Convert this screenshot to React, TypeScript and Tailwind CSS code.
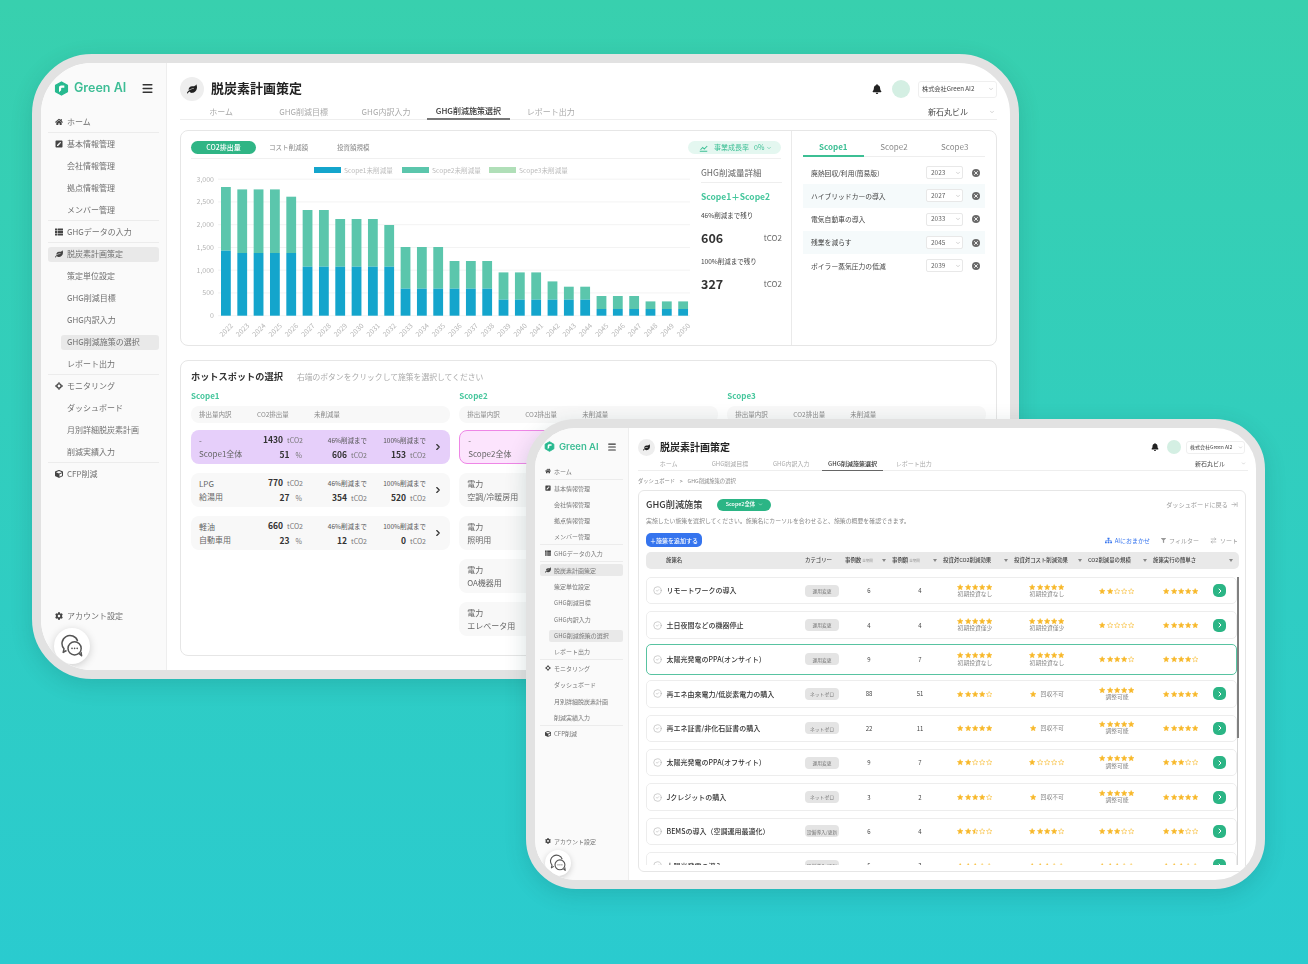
import type { ReactNode } from 'react'
import { FaBell, FaCog, FaCube, FaFilter, FaHome, FaLeaf, FaPenSquare, FaSitemap, FaThList } from 'react-icons/fa'
import { ArrowRightLeft, ArrowRightToLine, ChevronDown, ChevronRight, CircleCheck, Menu, X } from 'lucide-react'

type NavItem = { label: string; icon?: ReactNode; active?: boolean; line?: boolean }

const Monitor = ({ size }: { size: number }) => (
  <svg width={size} height={size} viewBox="0 0 16 16" fill="none" stroke="currentColor">
    <circle cx="8" cy="8" r="4.2" strokeWidth="2.6" />
    <path d="M8 0.5v3M8 12.5v3M0.5 8h3M12.5 8h3" strokeWidth="2.6" />
  </svg>
)

const navItems = (s: number): NavItem[] => [
  { label: 'ホーム', icon: <FaHome size={s} />, line: true },
  { label: '基本情報管理', icon: <FaPenSquare size={s} /> },
  { label: '会社情報管理' },
  { label: '拠点情報管理' },
  { label: 'メンバー管理', line: true },
  { label: 'GHGデータの入力', icon: <FaThList size={s} />, line: true },
  { label: '脱炭素計画策定', icon: <FaLeaf size={s} />, active: true },
  { label: '策定単位設定' },
  { label: 'GHG削減目標' },
  { label: 'GHG内訳入力' },
  { label: 'GHG削減施策の選択', active: true },
  { label: 'レポート出力', line: true },
  { label: 'モニタリング', icon: <Monitor size={s} /> },
  { label: 'ダッシュボード' },
  { label: '月別詳細脱炭素計画' },
  { label: '削減実績入力', line: true },
  { label: 'CFP削減', icon: <FaCube size={s} /> },
]

const Logo = ({ size }: { size: number }) => (
  <svg width={size} height={size} viewBox="0 0 24 24">
    <path d="M12 1.5 21.5 7v10L12 22.5 2.5 17V7Z" fill="#27b98f" stroke="#27b98f" strokeWidth="2" strokeLinejoin="round" />
    <path d="M8 18V10.8C8 8.6 9.4 7.2 11.6 7.2H16.5V10.6H12.6C11.8 10.6 11.4 11 11.4 11.8V14.6Z" fill="#fff" />
  </svg>
)

const ChatIcon = ({ size }: { size: number }) => (
  <svg width={size} height={size} viewBox="0 0 24 24" fill="none" stroke="#555" strokeWidth="1.5" strokeLinejoin="round">
    <path d="M6.5 16.5 3.2 18.4l.8-3.6A8 8 0 1 1 17.6 7" />
    <circle cx="14.6" cy="14.4" r="6.6" fill="#fff" />
    <path d="m19 19.4 2.6 2.4-.6-4" fill="#fff" />
    <circle cx="12" cy="14.4" r=".8" fill="#555" stroke="none" />
    <circle cx="14.6" cy="14.4" r=".8" fill="#555" stroke="none" />
    <circle cx="17.2" cy="14.4" r=".8" fill="#555" stroke="none" />
  </svg>
)

function SidebarLarge() {
  const items = navItems(8)
  return (
    <aside className="relative flex w-[126px] shrink-0 flex-col border-r border-[#eeeeee] bg-[#fafafa]">
      <div className="flex h-[48px] items-center pl-[13px] pr-[12px] pt-[2px]">
        <Logo size={15} />
        <span className="ml-[5px] font-['Inter',sans-serif] text-[12.5px] font-semibold text-[#3dbd95]">Green AI</span>
        <Menu size={13} strokeWidth={2.6} className="ml-auto text-[#333333]" />
      </div>
      {items.map((item) => (
        <div key={item.label} className={`mx-[7px] flex h-[22px] items-center ${item.line ? 'border-b border-[#ececec]' : ''}`}>
          {item.icon ? (
            <div className={`flex h-[15px] flex-1 items-center gap-[4px] rounded-[3px] pl-[7px] text-[8px] text-[#707070] ${item.active ? 'bg-[#e9e9e9]' : ''}`}>
              <span className="w-[8px] text-[#444444]">{item.icon}</span>
              {item.label}
            </div>
          ) : item.active ? (
            <div className="ml-[13px] flex h-[15px] flex-1 items-center rounded-[3px] bg-[#e9e9e9] pl-[6px] text-[8px] text-[#707070]">{item.label}</div>
          ) : (
            <div className="pl-[19px] text-[8px] text-[#707070]">{item.label}</div>
          )}
        </div>
      ))}
      <div className="mx-[7px] mb-[43px] mt-auto flex h-[22px] items-center gap-[4px] pl-[7px] text-[8px] text-[#707070]">
        <FaCog size={8} className="text-[#444444]" />
        アカウント設定
      </div>
      <div className="absolute bottom-[6px] left-[13px] flex h-[36px] w-[36px] items-center justify-center rounded-full bg-white shadow-[0_2px_8px_rgba(0,0,0,0.18)]">
        <ChatIcon size={24} />
      </div>
    </aside>
  )
}

function SidebarSmall() {
  const items = navItems(6)
  return (
    <aside className="relative flex w-[94px] shrink-0 flex-col border-r border-[#eeeeee] bg-[#fafafa]">
      <div className="flex h-[35.5px] items-center pl-[9px] pr-[11px] pt-[2px]">
        <Logo size={11} />
        <span className="ml-[4px] font-['Inter',sans-serif] text-[9.5px] font-semibold text-[#3dbd95]">Green AI</span>
        <Menu size={10} strokeWidth={2.6} className="ml-auto text-[#333333]" />
      </div>
      {items.map((item) => (
        <div key={item.label} className={`mx-[5px] flex h-[16.4px] items-center ${item.line ? 'border-b border-[#ececec]' : ''}`}>
          {item.icon ? (
            <div className={`flex h-[12px] flex-1 items-center gap-[3px] rounded-[2px] pl-[5px] text-[6px] text-[#777777] ${item.active ? 'bg-[#e9e9e9]' : ''}`}>
              <span className="w-[6px] text-[#444444]">{item.icon}</span>
              {item.label}
            </div>
          ) : item.active ? (
            <div className="ml-[9px] flex h-[12px] flex-1 items-center rounded-[2px] bg-[#e9e9e9] pl-[5px] text-[6px] text-[#777777]">{item.label}</div>
          ) : (
            <div className="pl-[14px] text-[6px] text-[#777777]">{item.label}</div>
          )}
        </div>
      ))}
      <div className="mx-[5px] mb-[31px] mt-auto flex h-[16px] items-center gap-[3px] pl-[5px] text-[6px] text-[#777777]">
        <FaCog size={6} className="text-[#444444]" />
        アカウント設定
      </div>
      <div className="absolute bottom-[4px] left-[10px] flex h-[26px] w-[26px] items-center justify-center rounded-full bg-white shadow-[0_2px_6px_rgba(0,0,0,0.18)]">
        <ChatIcon size={18} />
      </div>
    </aside>
  )
}

// chart: [total height, scope1 height] in px per year
const bars: [number, number][] = [
  [128.7, 65], [126.3, 62.7], [126.3, 62.7], [126.3, 62.7], [119, 62.7], [105.7, 49], [105.7, 49], [96.7, 49], [96.7, 49], [96.7, 49],
  [90.7, 49], [68.7, 27], [68.7, 27], [68.7, 27], [54.7, 27], [54.7, 27], [54.7, 27], [43.3, 16], [43.3, 16], [43.3, 16],
  [34.3, 16], [29, 16], [29, 16], [19.7, 6.7], [19.7, 6.7], [19.7, 6.7], [14.3, 6.7], [14.3, 6.7], [14.3, 6.7],
]

function Chart() {
  const base = 156.7
  return (
    <svg width="510" height="185" className="block shrink-0">
      {[
        ['Scope1未削減量', 123, '#14a5cc'],
        ['Scope2未削減量', 211, '#5bc6ac'],
        ['Scope3未削減量', 298, '#b0dfb8'],
      ].map(([t, x, c]) => (
        <g key={t as string}>
          <rect x={x as number} y="8" width="27" height="6" fill={c as string} />
          <text x={(x as number) + 30} y="13.5" fontSize="6.6" fill="#bcbcbc">{t}</text>
        </g>
      ))}
      {[0, 500, 1000, 1500, 2000, 2500, 3000].map((v, i) => (
        <g key={v}>
          <line x1="27" x2="499" y1={base - i * 22.75} y2={base - i * 22.75} stroke="#f3f3f3" />
          <text x="23" y={base + 2.5 - i * 22.75} textAnchor="end" fontSize="7" fill="#b5b5b5">{v.toLocaleString('en-US')}</text>
        </g>
      ))}
      {bars.map(([total, s1], i) => {
        const x = 30 + i * 16.33
        return (
          <g key={i}>
            <rect x={x} y={base - total} width="9.8" height={total - s1} fill="#5bc6ac" />
            <rect x={x} y={base - s1} width="9.8" height={s1} fill="#14a5cc" />
            <text transform={`translate(${x + 8} ${base + 6}) rotate(-45)`} textAnchor="end" dominantBaseline="hanging" fontSize="7" fill="#b5b5b5">{2022 + i}</text>
          </g>
        )
      })}
    </svg>
  )
}

function DetailPanel() {
  return (
    <div className="flex w-[81px] shrink-0 flex-col">
      <div className="flex h-[24px] items-center border-b border-[#eeeeee] pt-[4px] text-[8.5px] text-[#666666]">GHG削減量詳細</div>
      <div className="mt-[6px] flex h-[14px] items-center text-[8.5px] font-bold text-[#45c69c]">Scope1＋Scope2</div>
      <div className="mt-[6px] flex h-[14px] items-center text-[6.5px] text-[#444444]">46%削減まで残り</div>
      <div className="mt-[4px] flex h-[22px] items-center justify-between text-[#333333]">
        <span className="text-[12.5px] font-bold">606</span>
        <span className="text-[8px] text-[#666666]">tCO2</span>
      </div>
      <div className="mt-[6px] flex h-[14px] items-center text-[6.5px] text-[#444444]">100%削減まで残り</div>
      <div className="mt-[4px] flex h-[22px] items-center justify-between text-[#333333]">
        <span className="text-[12.5px] font-bold">327</span>
        <span className="text-[8px] text-[#666666]">tCO2</span>
      </div>
    </div>
  )
}

const picked = [
  ['廃熱回収/利用(簡易版)', '2023'],
  ['ハイブリッドカーの導入', '2027'],
  ['電気自動車の導入', '2033'],
  ['残業を減らす', '2045'],
  ['ボイラー蒸気圧力の低減', '2039'],
]

function PickedPanel() {
  return (
    <div className="w-[205px] px-[11px] pt-[10px]">
      <div className="grid h-[16px] grid-cols-3 border-b border-[#eeeeee] text-center text-[8px] leading-[12px] text-[#888888]">
        <div className="h-[16px] border-b-2 border-[#3cbf94] font-bold text-[#3cbf94]">Scope1</div>
        <div>Scope2</div>
        <div>Scope3</div>
      </div>
      <div className="mt-[4px]">
        {picked.map(([name, year], i) => (
          <div key={name} className={`flex h-[23.3px] items-center pl-[8px] pr-[5.5px] text-[6.8px] text-[#444444] ${i % 2 === 1 ? 'bg-[#f5fafb]' : ''}`}>
            <span className="flex-1">{name}</span>
            <span className="flex h-[13px] w-[37px] items-center justify-between rounded-[2px] border border-[#e8e8e8] bg-white pl-[4px] pr-[1px] text-[6.5px] text-[#666666]">
              {year}
              <ChevronDown size={6} className="text-[#aaaaaa]" />
            </span>
            <span className="ml-[8.5px] flex h-[8px] w-[8px] items-center justify-center rounded-full bg-[#6a6a6a] text-white">
              <X size={6} strokeWidth={3.5} />
            </span>
          </div>
        ))}
      </div>
    </div>
  )
}

type Hot = { a: string; b: string; total: string; pct: string; r46: string; r100: string }

const scope1Rows: Hot[] = [
  { a: '-', b: 'Scope1全体', total: '1430', pct: '51', r46: '606', r100: '153' },
  { a: 'LPG', b: '給湯用', total: '770', pct: '27', r46: '354', r100: '520' },
  { a: '軽油', b: '自動車用', total: '660', pct: '23', r46: '12', r100: '0' },
]

function HotRow({ row, tone }: { row: Hot; tone: string }) {
  return (
    <div className={`grid h-[34px] grid-cols-[58px_54px_64px_59px_24px] items-center rounded-[8px] ${tone}`}>
      <div className="pl-[8px] text-[8px] leading-[13px] text-[#666666]">
        <div>{row.a}</div>
        <div>{row.b}</div>
      </div>
      <div className="text-right text-[7px] leading-[14px] text-[#777777]">
        <div><span className="mr-[4px] text-[8.5px] font-bold text-[#333333]">{row.total}</span>tCO2</div>
        <div><span className="mr-[6px] text-[8.5px] font-bold text-[#333333]">{row.pct}</span><span className="mr-[1px]">%</span></div>
      </div>
      <div className="text-right text-[7px] leading-[14px] text-[#777777]">
        <div className="text-[6.5px] text-[#555555]">46%削減まで</div>
        <div><span className="mr-[4px] text-[8.5px] font-bold text-[#333333]">{row.r46}</span>tCO2</div>
      </div>
      <div className="text-right text-[7px] leading-[14px] text-[#777777]">
        <div className="text-[6.5px] text-[#555555]">100%削減まで</div>
        <div><span className="mr-[4px] text-[8.5px] font-bold text-[#333333]">{row.r100}</span>tCO2</div>
      </div>
      <div className="flex justify-center text-[#333333]">
        <ChevronRight size={10} strokeWidth={2.8} />
      </div>
    </div>
  )
}

// Scope2 rows lie mostly under the second window, only the left part shows
const scope2Rows = [
  ['-', 'Scope2全体'],
  ['電力', '空調/冷暖房用'],
  ['電力', '照明用'],
  ['電力', 'OA機器用'],
  ['電力', 'エレベータ用'],
]

function HotHeader() {
  return (
    <div className="mt-[4px] flex h-[17px] items-center rounded-[8px] bg-[#f8f8f8] text-[6.5px] text-[#888888]">
      <span className="w-[66px] pl-[8px]">排出量内訳</span>
      <span className="w-[57px]">CO2排出量</span>
      <span>未削減量</span>
    </div>
  )
}

function FrameOne() {
  const tabs = ['ホーム', 'GHG削減目標', 'GHG内訳入力', 'GHG削減施策選択', 'レポート出力']
  return (
    <div className="absolute left-[32px] top-[54px] flex h-[625px] w-[987px] overflow-hidden rounded-[60px] border-[9px] border-[#e2e2e2] bg-white shadow-[0_6px_22px_rgba(0,60,60,0.16)] blur-[0.45px]">
      <SidebarLarge />
      <main className="flex min-w-0 flex-1 flex-col px-[13px] pt-[14px]">
        <div className="flex h-[24px] items-center">
          <div className="flex h-[24px] w-[24px] items-center justify-center rounded-full bg-[#eeeeee]">
            <FaLeaf size={10} className="text-[#222222]" />
          </div>
          <h1 className="-mt-[2px] ml-[7px] text-[13px] font-bold text-[#222222]">脱炭素計画策定</h1>
          <div className="ml-auto flex items-center">
            <FaBell size={10} className="text-[#222222]" />
            <div className="ml-[10px] h-[18px] w-[18px] rounded-full bg-[#d4efe3]" />
            <div className="ml-[8px] flex h-[17px] w-[79px] items-center justify-between rounded-[3px] border border-[#efefef] pl-[3px] pr-[2px] text-[6.2px] text-[#444444]">
              株式会社Green AI2
              <ChevronDown size={6} className="text-[#aaaaaa]" />
            </div>
          </div>
        </div>
        <div className="flex h-[19px] items-stretch border-b border-[#eeeeee]">
          {tabs.map((t, i) => (
            <div key={t} className={`flex w-[82.4px] items-center justify-center pt-[3px] text-[8px] ${i === 3 ? '-mb-px border-b-2 border-[#777777] font-medium text-[#333333]' : 'text-[#aaaaaa]'}`}>
              {t}
            </div>
          ))}
          <div className="ml-auto flex w-[79px] items-center justify-between pl-[10px] pr-[2px] pt-[3px] text-[8px] text-[#444444]">
            新石丸ビル
            <ChevronDown size={6} className="text-[#aaaaaa]" />
          </div>
        </div>

        <section className="mt-[10px] flex h-[216px] shrink-0 rounded-[8px] border border-[#e6e6e6]">
          <div className="w-[611px] shrink-0 border-r border-[#eaeaea] px-[10px] pt-[10px]">
            <div className="flex h-[18px] items-start border-b border-[#f0f0f0] text-[6.5px] text-[#888888]">
              <span className="flex h-[13px] w-[65px] items-center justify-center rounded-full bg-[#2fb585] text-[7px] font-medium text-white">CO2排出量</span>
              <span className="ml-[13px] flex h-[13px] items-center">コスト削減額</span>
              <span className="ml-[29px] flex h-[13px] items-center">投資額規模</span>
              <span className="ml-auto flex h-[13px] w-[93px] items-center rounded-full bg-[#e4f7f0] pl-[11px] text-[7px] text-[#3cbf94]">
                <svg width="9" height="9" viewBox="0 0 12 12" fill="none" stroke="currentColor" strokeWidth="1.4" className="mr-[6px]">
                  <path d="M1 11h10M2 9l3-3 2 2 4-4" />
                </svg>
                事業成長率
                <span className="ml-[5px]">0%</span>
                <ChevronDown size={6} className="ml-[2px]" />
              </span>
            </div>
            <div className="flex">
              <Chart />
              <DetailPanel />
            </div>
          </div>
          <PickedPanel />
        </section>

        <section className="mt-[14px] h-[296px] shrink-0 rounded-[8px] border border-[#e6e6e6] px-[10px] pt-[8px]">
          <div className="flex h-[16px] items-center">
            <h2 className="text-[9.2px] font-bold text-[#333333]">ホットスポットの選択</h2>
            <span className="ml-[14px] text-[7.8px] text-[#aaaaaa]">右端のボタンをクリックして施策を選択してください</span>
          </div>
          <div className="mt-[5px] grid grid-cols-3 gap-x-[9.5px]">
            <div>
              <div className="h-[12px] text-[8px] font-bold leading-[12px] text-[#45c69c]">Scope1</div>
              <HotHeader />
              <div className="mt-[7px] flex flex-col gap-[9px]">
                {scope1Rows.map((r, i) => (
                  <HotRow key={r.b} row={r} tone={i === 0 ? 'bg-[#e6cffa]' : 'bg-[#f8f8f8]'} />
                ))}
              </div>
            </div>
            <div>
              <div className="h-[12px] text-[8px] font-bold leading-[12px] text-[#45c69c]">Scope2</div>
              <HotHeader />
              <div className="mt-[7px] flex flex-col gap-[9px]">
                {scope2Rows.map(([a, b], i) => (
                  <div key={b} className={`flex h-[34px] flex-col justify-center rounded-[8px] pl-[8px] text-[8px] leading-[13px] text-[#666666] ${i === 0 ? 'border border-[#ee86e6] bg-[#fce4fd]' : 'bg-[#f8f8f8]'}`}>
                    <div>{a}</div>
                    <div>{b}</div>
                  </div>
                ))}
              </div>
            </div>
            <div>
              <div className="h-[12px] text-[8px] font-bold leading-[12px] text-[#45c69c]">Scope3</div>
              <HotHeader />
            </div>
          </div>
        </section>
      </main>
    </div>
  )
}

const Star = ({ fill }: { fill: 'full' | 'half' | 'empty' }) => (
  <svg width="6.4" height="6.4" viewBox="0 0 24 24">
    <defs>
      <clipPath id="half-star">
        <rect x="0" y="0" width="12" height="24" />
      </clipPath>
    </defs>
    <path
      d="M12 2l3 6.9 7.5.7-5.7 4.9 1.7 7.3L12 18l-6.5 3.8 1.7-7.3L1.5 9.6 9 8.9Z"
      fill={fill === 'full' ? '#f8b92c' : 'none'}
      stroke="#f8b92c"
      strokeWidth="2"
      strokeLinejoin="round"
    />
    {fill === 'half' && (
      <path d="M12 2l3 6.9 7.5.7-5.7 4.9 1.7 7.3L12 18l-6.5 3.8 1.7-7.3L1.5 9.6 9 8.9Z" fill="#f8b92c" clipPath="url(#half-star)" />
    )}
  </svg>
)

const Stars = ({ n }: { n: number }) => (
  <div className="flex gap-[0.9px]">
    {[0, 1, 2, 3, 4].map((i) => (
      <Star key={i} fill={n >= i + 1 ? 'full' : n > i ? 'half' : 'empty'} />
    ))}
  </div>
)

const Rating = ({ n, note }: { n: number; note?: string }) => {
  if (note === '回収不可') {
    return (
      <div className="flex items-center justify-center text-[5.8px] text-[#888888]">
        <Star fill="full" />
        <span className="ml-[4px]">回収不可</span>
      </div>
    )
  }
  return (
    <div className="flex flex-col items-center text-[5.8px] leading-[8px] text-[#888888]">
      <Stars n={n} />
      {note && <span>{note}</span>}
    </div>
  )
}

type Measure = {
  name: string
  cat: string
  cases: string
  amount: string
  co2: [number, string?]
  cost: [number, string?]
  scale: [number, string?]
  ease: number
  hot?: boolean
}

const measures: Measure[] = [
  { name: 'リモートワークの導入', cat: '運用変更', cases: '6', amount: '4', co2: [5, '初期投資なし'], cost: [5, '初期投資なし'], scale: [2], ease: 5 },
  { name: '土日夜間などの機器停止', cat: '運用変更', cases: '4', amount: '4', co2: [5, '初期投資僅少'], cost: [5, '初期投資僅少'], scale: [1], ease: 5 },
  { name: '太陽光発電のPPA(オンサイト)', cat: '運用変更', cases: '9', amount: '7', co2: [5, '初期投資なし'], cost: [5, '初期投資なし'], scale: [4], ease: 4, hot: true },
  { name: '再エネ由来電力/低炭素電力の購入', cat: 'ネットゼロ', cases: '88', amount: '51', co2: [4], cost: [1, '回収不可'], scale: [5, '調整可能'], ease: 5 },
  { name: '再エネ証書/非化石証書の購入', cat: 'ネットゼロ', cases: '22', amount: '11', co2: [5], cost: [1, '回収不可'], scale: [5, '調整可能'], ease: 5 },
  { name: '太陽光発電のPPA(オフサイト)', cat: '運用変更', cases: '9', amount: '7', co2: [2], cost: [1], scale: [5, '調整可能'], ease: 3 },
  { name: 'Jクレジットの購入', cat: 'ネットゼロ', cases: '3', amount: '2', co2: [4], cost: [1, '回収不可'], scale: [5, '調整可能'], ease: 5 },
  { name: 'BEMSの導入（空調運用最適化）', cat: '設備導入/更新', cases: '6', amount: '4', co2: [2.5], cost: [4], scale: [3], ease: 3 },
  { name: '太陽光発電の導入', cat: '設備導入/更新', cases: '5', amount: '3', co2: [3], cost: [3], scale: [3], ease: 3 },
]

const tableHead = [
  { label: '事例数', note: '全期間' },
  { label: '事例額', note: '全期間' },
  { label: '投資対CO2削減効果' },
  { label: '投資対コスト削減効果' },
  { label: 'CO2削減量の規模' },
  { label: '施策実行の簡単さ' },
]

function MeasureRow({ m }: { m: Measure }) {
  return (
    <div
      className={`grid shrink-0 grid-cols-[158px_34px_60px_42px_68px_76px_64px_64px_14px] items-center rounded-[5px] bg-white text-[#444444] ${
        m.hot ? '-my-[1.5px] h-[30.4px] border border-[#58c3a1]' : 'h-[27.4px] border border-[#ededed]'
      }`}
    >
      <div className="flex items-center pl-[5.5px]">
        <CircleCheck size={9} strokeWidth={1.6} className="text-[#b0b0b0]" />
        <span className="ml-[5px] whitespace-nowrap text-[7px] font-medium text-[#333333]">{m.name}</span>
      </div>
      <span className="flex h-[12px] items-center justify-center overflow-hidden whitespace-nowrap rounded-[4px] bg-[#e4e4e4] text-[4.8px] text-[#777777]">{m.cat}</span>
      <span className="text-center text-[6px]">{m.cases}</span>
      <span className="text-center text-[6px]">{m.amount}</span>
      <Rating n={m.co2[0]} note={m.co2[1]} />
      <Rating n={m.cost[0]} note={m.cost[1]} />
      <Rating n={m.scale[0]} note={m.scale[1]} />
      <Rating n={m.ease} />
      {m.hot ? (
        <span />
      ) : (
        <span className="flex h-[13px] w-[13px] items-center justify-center rounded-[5px] bg-[#2bb585] text-white">
          <ChevronRight size={8} strokeWidth={3} />
        </span>
      )}
    </div>
  )
}

function FrameTwo() {
  const tabs = ['ホーム', 'GHG削減目標', 'GHG内訳入力', 'GHG削減施策選択', 'レポート出力']
  return (
    <div className="absolute left-[526px] top-[419px] flex h-[470px] w-[739px] overflow-hidden rounded-[50px] border-[9px] border-[#e2e2e2] bg-white shadow-[0_6px_22px_rgba(0,60,60,0.16)] blur-[0.45px]">
      <SidebarSmall />
      <main className="flex min-w-0 flex-1 flex-col pl-[9px] pr-[10px] pt-[10px]">
        <div className="flex h-[18px] items-center">
          <div className="flex h-[17px] w-[17px] items-center justify-center rounded-full bg-[#eeeeee]">
            <FaLeaf size={7} className="text-[#222222]" />
          </div>
          <h1 className="-mt-[1px] ml-[5px] text-[10px] font-bold text-[#222222]">脱炭素計画策定</h1>
          <div className="ml-auto flex items-center pr-[1px]">
            <FaBell size={8} className="text-[#222222]" />
            <div className="ml-[8px] h-[14px] w-[14px] rounded-full bg-[#d4efe3]" />
            <div className="ml-[5px] flex h-[13px] w-[59px] items-center justify-between rounded-[3px] border border-[#efefef] pl-[3px] pr-[1px] text-[5px] text-[#444444]">
              株式会社Green AI2
              <ChevronDown size={5} className="text-[#aaaaaa]" />
            </div>
          </div>
        </div>
        <div className="-mr-[2px] flex h-[15px] items-stretch border-b border-[#eeeeee]">
          {tabs.map((t, i) => (
            <div key={t} className={`flex w-[61.3px] items-center justify-center text-[6px] ${i === 3 ? '-mb-px border-b border-[#666666] font-medium text-[#333333]' : 'text-[#aaaaaa]'}`}>
              {t}
            </div>
          ))}
          <div className="ml-auto flex w-[53px] items-center justify-between pr-[2px] text-[6px] text-[#444444]">
            新石丸ビル
            <ChevronDown size={5} className="text-[#aaaaaa]" />
          </div>
        </div>
        <div className="mt-[7px] flex h-[8px] items-center whitespace-pre text-[5.3px] text-[#888888]">{'ダッシュボード    >    GHG削減施策の選択'}</div>

        <section className="mt-[4px] flex h-[382px] shrink-0 flex-col rounded-[6px] border border-[#e6e6e6] pb-[6px] pl-[7px] pr-[6px] pt-[7px]">
          <div className="flex h-[13px] items-center">
            <h2 className="text-[9.2px] font-medium text-[#333333]">GHG削減施策</h2>
            <span className="ml-[15px] flex h-[12px] w-[54px] items-center justify-center gap-[3px] rounded-full bg-[#2bb585] text-[5.4px] font-medium text-white">
              Scope2全体
              <ChevronDown size={5} />
            </span>
            <span className="ml-auto flex items-center gap-[3px] pr-[1px] text-[6.2px] text-[#999999]">
              ダッシュボードに戻る
              <ArrowRightToLine size={7} />
            </span>
          </div>
          <p className="mt-[5px] h-[10px] text-[5.9px] leading-[10px] text-[#888888]">
            実施したい施策を選択してください。施策名にカーソルを合わせると、施策の概要を確認できます。
          </p>
          <div className="mt-[7px] flex h-[14px] items-center">
            <span className="flex h-[14px] w-[56px] items-center justify-center rounded-[5px] bg-[#3574ee] text-[6px] font-medium text-white">＋施策を追加する</span>
            <span className="ml-auto flex items-center gap-[3px] text-[6px] text-[#3574ee]">
              <FaSitemap size={7} />
              AIにおまかせ
            </span>
            <span className="ml-[11px] flex items-center gap-[3px] text-[6px] text-[#999999]">
              <FaFilter size={5} />
              フィルター
            </span>
            <span className="ml-[11px] flex items-center gap-[3px] pr-[1px] text-[6px] text-[#999999]">
              <ArrowRightLeft size={7} />
              ソート
            </span>
          </div>
          <div className="mt-[5px] grid h-[17px] shrink-0 grid-cols-[159px_40px_47px_51px_71px_74px_65px_1fr] items-center rounded-[5px] bg-[#e9e9e9] text-[5.4px] font-medium text-[#444444]">
            <span className="pl-[20px]">施策名</span>
            <span>カテゴリー</span>
            {tableHead.map((h) => (
              <span key={h.label} className="flex items-center justify-between pr-[6px]">
                <span className="whitespace-nowrap">
                  {h.label}
                  {h.note && <span className="ml-[1px] text-[3.6px] font-normal text-[#999999]">{h.note}</span>}
                </span>
                <svg width="4" height="3" viewBox="0 0 4 3"><path d="M0 0h4L2 3Z" fill="#888888" /></svg>
              </span>
            ))}
          </div>
          <div className="relative mt-[8px] min-h-0 flex-1 overflow-hidden">
            <div className="flex w-[591px] flex-col gap-[7px]">
              {measures.map((m) => (
                <MeasureRow key={m.name} m={m} />
              ))}
            </div>
            <div className="absolute bottom-0 right-[1px] top-0 w-[1px] bg-[#d6d6d6]" />
            <div className="absolute right-[0.5px] top-[-3px] h-[164px] w-[1.5px] bg-[#808080]" />
          </div>
        </section>
      </main>
    </div>
  )
}

export default function App() {
  return (
    <div className="relative h-[964px] w-[1308px] overflow-hidden bg-linear-to-b from-[#38d0ae] to-[#2acbcf] font-['Noto_Sans_CJK_JP','Noto_Sans',sans-serif]">
      <FrameOne />
      <FrameTwo />
    </div>
  )
}
